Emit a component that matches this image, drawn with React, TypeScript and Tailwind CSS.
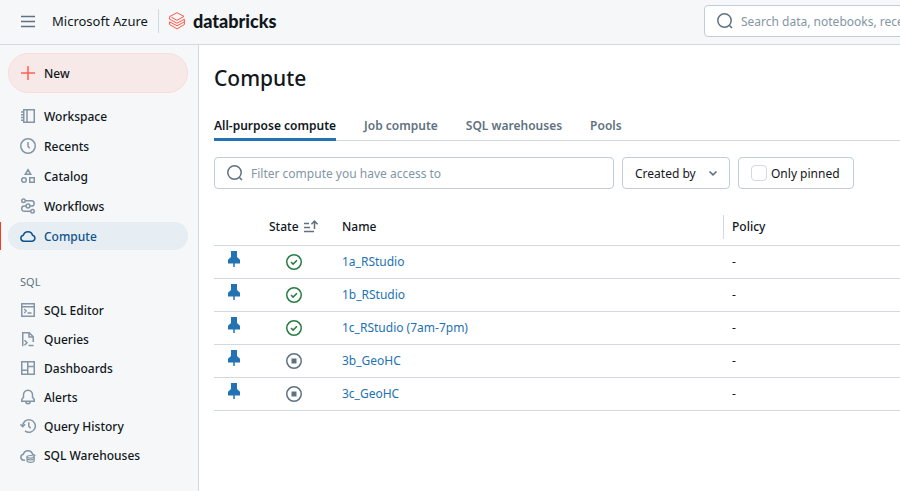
import React from 'react';

type IconProps = { className?: string };

function Svg({ className = '', children }: { className?: string; children: React.ReactNode }) {
  return (
    <svg
      viewBox="0 0 16 16"
      className={`size-4 shrink-0 ${className}`}
      fill="none"
      stroke="currentColor"
      strokeWidth="1.5"
      aria-hidden="true"
    >
      {children}
    </svg>
  );
}

const MenuIcon = ({ className }: IconProps) => (
  <Svg className={className}>
    <path d="M1 3.5h14M1 8.5h14M1 13.5h14" strokeWidth="1.3" />
  </Svg>
);

const PlusIcon = ({ className }: IconProps) => (
  <Svg className={className}>
    <path d="M8 1v14M1 8h14" />
  </Svg>
);

const NotebookIcon = ({ className }: IconProps) => (
  <Svg className={className}>
    <path d="M3.75 1.75h10.5v12.5H3.75zM7 1.75v12.5M1 4h2.5M1 6.75h2.5M1 9.5h2.5M1 12.25h2.5" />
  </Svg>
);

const ClockIcon = ({ className }: IconProps) => (
  <Svg className={className}>
    <circle cx="8" cy="8" r="7.25" />
    <path d="M8 4v4.3l1.8 1.9" />
  </Svg>
);

const CatalogIcon = ({ className }: IconProps) => (
  <Svg className={className}>
    <path d="M8 1.7l2.7 4.55H5.3zM9.75 9.75h4.5v4.5h-4.5z" />
    <circle cx="4" cy="12" r="2.3" />
  </Svg>
);

const WorkflowsIcon = ({ className }: IconProps) => (
  <Svg className={className}>
    <circle cx="3.5" cy="2.75" r="1.75" />
    <circle cx="8" cy="8" r="1.9" />
    <circle cx="12.5" cy="13.25" r="1.75" />
    <path d="M5.3 2.75h6.2a2.6 2.6 0 0 1 0 5.25H10M6 8H4.3a2.6 2.6 0 0 0 0 5.25h6.4" />
  </Svg>
);

const CloudIcon = ({ className }: IconProps) => (
  <Svg className={className}>
    <path d="M3.8 13.2a3.05 3.05 0 0 1-.4-6.05 4.7 4.7 0 0 1 9.1.05 3.05 3.05 0 0 1-.3 6z" />
  </Svg>
);

const EditorIcon = ({ className }: IconProps) => (
  <Svg className={className}>
    <path d="M1.75 1.75h12.5v12.5H1.75zM1.75 4.75h12.5" />
    <path d="M4.2 7l2 2-2 2M7.5 11h4" strokeWidth="1.3" />
  </Svg>
);

const QueryIcon = ({ className }: IconProps) => (
  <Svg className={className}>
    <path d="M2.75 15.2V1.75h6.5l4 4V11M9 1.75V6h4.25" />
    <path d="M4.5 9.2l2.5 2.5-2.5 2.5M8.5 14.5h5" />
  </Svg>
);

const DashboardIcon = ({ className }: IconProps) => (
  <Svg className={className}>
    <path d="M1.75 1.75h12.5v12.5H1.75zM7.75 1.75v12.5M1.75 10.25h6M7.75 6.5h6.5" />
  </Svg>
);

const BellIcon = ({ className }: IconProps) => (
  <Svg className={className}>
    <path d="M8 1.25a4.5 4.5 0 0 0-4.5 4.5v2.4L1.75 10.6v1.65h12.5V10.6L12.5 8.15v-2.4A4.5 4.5 0 0 0 8 1.25z" />
    <path d="M5.8 12.5a2.2 2.2 0 0 0 4.4 0" />
  </Svg>
);

const HistoryIcon = ({ className }: IconProps) => (
  <Svg className={className}>
    <path d="M2.7 8.2A6.3 6.3 0 1 1 5 12.9" />
    <path d="M.4 6.3l2.3 2.4 2.4-2.4M8.8 4.3v4l1.8 1.8" />
  </Svg>
);

const WarehouseIcon = ({ className }: IconProps) => (
  <Svg className={className}>
    <path d="M5 13.2H3.8a3.05 3.05 0 0 1-.4-6.05 4.7 4.7 0 0 1 9.1.05c1.2.2 2.1.8 2.6 1.7" />
    <path
      d="M7 9.8v4c0 .9 1.6 1.5 3.6 1.5s3.6-.6 3.6-1.5v-4M7 12c.6.6 2 .9 3.6.9s3-.3 3.6-.9"
      strokeWidth="1.2"
    />
    <ellipse cx="10.6" cy="9.8" rx="3.6" ry="1.3" strokeWidth="1.2" />
  </Svg>
);

const SearchIcon = ({ className }: IconProps) => (
  <Svg className={className}>
    <circle cx="7.5" cy="7.5" r="6.7" />
    <path d="M12.2 12.2L15 15" />
  </Svg>
);

const SortIcon = ({ className }: IconProps) => (
  <Svg className={className}>
    <path d="M1 4.5h5M1 8.5h6M1 12.5h10M11.5 10V2.2M8.4 5.2l3.1-3.1 3.1 3.1" strokeWidth="1.5" />
  </Svg>
);

const PinIcon = ({ className }: IconProps) => (
  <Svg className={className}>
    <path d="M5 0h6v6l3 2.8v3.7H2V8.8L5 6z" fill="currentColor" stroke="none" />
    <path d="M8 12v4" />
  </Svg>
);

const RunningIcon = ({ className }: IconProps) => (
  <Svg className={className}>
    <circle cx="8" cy="8" r="7.25" />
    <path d="M5 8l2.1 2.1L11 6.2" />
  </Svg>
);

const StoppedIcon = ({ className }: IconProps) => (
  <Svg className={className}>
    <circle cx="8" cy="8" r="7.25" />
    <path d="M5.5 5.5h5v5h-5z" fill="currentColor" stroke="none" />
  </Svg>
);

const ChevronIcon = ({ className }: IconProps) => (
  <Svg className={className}>
    <path d="M4.5 6.5L8 9.8l3.5-3.3" strokeWidth="1.7" />
  </Svg>
);

const BricksLogo = () => (
  <svg
    viewBox="0 0 16 18"
    className="h-[18px] w-4 shrink-0"
    fill="none"
    stroke="#ff5546"
    strokeWidth="1"
    strokeLinejoin="round"
    aria-hidden="true"
  >
    <path d="M.6 4.6L8 .7l7 3.7L8 8.3 2.4 5.2" />
    <path d="M.6 4.6v2.6L8 11.2l7.4-4v2.6L8 13.8.6 9.8v2.7L8 16.9l7.4-4.4V9.8" />
  </svg>
);

type NavEntry = { label: string; icon: React.FC<IconProps>; active?: boolean };

const mainNav: NavEntry[] = [
  { label: 'Workspace', icon: NotebookIcon },
  { label: 'Recents', icon: ClockIcon },
  { label: 'Catalog', icon: CatalogIcon },
  { label: 'Workflows', icon: WorkflowsIcon },
  { label: 'Compute', icon: CloudIcon, active: true },
];

const sqlNav: NavEntry[] = [
  { label: 'SQL Editor', icon: EditorIcon },
  { label: 'Queries', icon: QueryIcon },
  { label: 'Dashboards', icon: DashboardIcon },
  { label: 'Alerts', icon: BellIcon },
  { label: 'Query History', icon: HistoryIcon },
  { label: 'SQL Warehouses', icon: WarehouseIcon },
];

const tabs = ['All-purpose compute', 'Job compute', 'SQL warehouses', 'Pools'];

const clusters = [
  { name: '1a_RStudio', running: true },
  { name: '1b_RStudio', running: true },
  { name: '1c_RStudio (7am-7pm)', running: true },
  { name: '3b_GeoHC', running: false },
  { name: '3c_GeoHC', running: false },
];

function NavLink({ label, icon: Icon, active }: NavEntry) {
  return (
    <li className={`border-l pr-2.5 pl-[7px] ${active ? 'border-[#ff3621]' : 'border-transparent'}`}>
      <a
        href="#"
        aria-current={active ? 'page' : undefined}
        className={`flex h-7 items-center gap-2 rounded-full px-3 font-medium ${
          active ? 'bg-[#e6edf3] text-[#0e538b]' : ''
        }`}
      >
        <Icon className={active ? 'text-[#0e538b]' : 'text-[#8396a5]'} />
        {label}
      </a>
    </li>
  );
}

export default function App() {
  return (
    <div className="flex min-h-screen flex-col overflow-hidden bg-white font-['Noto_Sans','Open_Sans',sans-serif] text-xs leading-[21px] text-[#11171c]">
      <header className="flex h-[45px] items-center overflow-hidden border-b border-[#d1d9e1] bg-[#f6f7f9] pb-0.5">
        <div className="flex w-[704px] shrink-0 items-center pl-5">
          <button type="button" aria-label="Toggle navigation" className="mr-4 text-[#5f7281]">
            <MenuIcon className="block" />
          </button>
          <span className="border-r border-[#d1d9e1] pr-2.5 text-[13px] leading-6">Microsoft Azure</span>
          <a href="#" className="flex items-center gap-2 pl-2.5">
            <BricksLogo />
            <span className="font-['Lato',sans-serif] text-lg leading-6 font-black">databricks</span>
          </a>
        </div>
        <label className="flex h-8 w-[496px] shrink-0 items-center gap-2 rounded border border-[#c0cdd8] bg-white px-3">
          <SearchIcon className="text-[#5f7281]" />
          <input
            type="search"
            aria-label="Search"
            placeholder="Search data, notebooks, recents, and more..."
            className="min-w-0 flex-1 outline-none placeholder:text-[#8396a5]"
          />
        </label>
      </header>

      <div className="flex flex-1">
        <aside className="w-[199px] shrink-0 border-r border-[#d1d9e1] bg-[#f6f7f9] pt-2">
          <button
            type="button"
            className="mr-2.5 ml-2 flex h-10 w-[180px] items-center gap-2 rounded-full border border-[#fbdcdc] bg-[#f8e9e9] px-[11px] font-medium"
          >
            <PlusIcon className="text-[#ff5f56]" />
            New
          </button>
          <nav aria-label="Main" className="pt-[9px]">
            <ul className="flex flex-col gap-0.5">
              {mainNav.map((item) => (
                <NavLink key={item.label} {...item} />
              ))}
            </ul>
            <h2 className="pt-[21px] pb-1 pl-5 text-[11px] text-[#5f7281]">SQL</h2>
            <ul className="flex flex-col gap-px">
              {sqlNav.map((item) => (
                <NavLink key={item.label} {...item} />
              ))}
            </ul>
          </nav>
        </aside>

        <main className="min-w-0 flex-1 pt-[17px] pl-[15px]">
          <h1 className="text-[21px] leading-8 font-medium">Compute</h1>

          <div role="tablist" className="mt-[19px] flex h-7 gap-7 border-b border-[#d1d9e1]">
            {tabs.map((tab, i) => (
              <button
                key={tab}
                type="button"
                role="tab"
                aria-selected={i === 0}
                className={`-mb-px flex h-7 items-start border-b-3 pt-0.5 font-semibold ${
                  i === 0 ? 'border-[#2272b4]' : 'border-transparent text-[#5f7281]'
                }`}
              >
                {tab}
              </button>
            ))}
          </div>

          <div className="mt-4 flex gap-2">
            <label className="flex h-8 w-[400px] items-center gap-2 rounded border border-[#c0cdd8] px-3">
              <SearchIcon className="text-[#5f7281]" />
              <input
                type="text"
                aria-label="Filter compute"
                placeholder="Filter compute you have access to"
                className="min-w-0 flex-1 outline-none placeholder:text-[#8396a5]"
              />
            </label>
            <div className="grid h-8 w-[108px] items-center rounded border border-[#c0cdd8]">
              <select
                aria-label="Created by"
                className="col-start-1 row-start-1 h-full appearance-none bg-transparent pr-7 pl-3 outline-none"
              >
                <option>Created by</option>
              </select>
              <ChevronIcon className="pointer-events-none col-start-1 row-start-1 mr-2 justify-self-end text-[#5f7281]" />
            </div>
            <label className="flex h-8 w-[116px] items-center gap-1 rounded border border-[#c0cdd8] pl-3">
              <input
                type="checkbox"
                className="size-4 appearance-none rounded border border-[#d1d9e1] checked:bg-[#2272b4]"
              />
              Only pinned
            </label>
          </div>

          <table className="mt-5 w-full table-fixed border-collapse text-left">
            <colgroup>
              <col className="w-10" />
              <col className="w-20" />
              <col />
              <col className="w-[177px]" />
            </colgroup>
            <thead>
              <tr className="h-9 border-b border-[#d1d9e1]">
                <th className="p-0" aria-label="Pinned" />
                <th aria-sort="ascending" className="p-0 pl-[15px] font-medium">
                  <span className="flex items-center gap-1">
                    State
                    <SortIcon className="text-[#5f7281]" />
                  </span>
                </th>
                <th className="p-0 pl-2 font-medium">Name</th>
                <th className="p-0 font-medium">
                  <span className="block border-l border-[#d1d9e1] pl-2 leading-6">Policy</span>
                </th>
              </tr>
            </thead>
            <tbody>
              {clusters.map(({ name, running }) => (
                <tr key={name} className="h-[33px] border-b border-[#d1d9e1]">
                  <td className="p-0 pb-1.5">
                    <PinIcon className="mx-auto block text-[#2272b4]" />
                  </td>
                  <td className="p-0">
                    {running ? (
                      <RunningIcon className="mx-auto block text-[#277c43]" />
                    ) : (
                      <StoppedIcon className="mx-auto block text-[#5f7281]" />
                    )}
                  </td>
                  <td className="p-0 pl-2">
                    <a href="#" className="text-[#2272b4]">
                      {name}
                    </a>
                  </td>
                  <td className="p-0 pl-[9px]">-</td>
                </tr>
              ))}
            </tbody>
          </table>
        </main>
      </div>
    </div>
  );
}
